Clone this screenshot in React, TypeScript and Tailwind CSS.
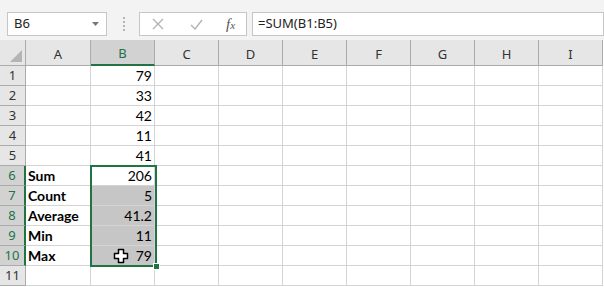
import React from "react";

const cols = ["A", "B", "C", "D", "E", "F", "G", "H", "I"];

const rows: { a?: string; b?: string }[] = [
  { b: "79" },
  { b: "33" },
  { b: "42" },
  { b: "11" },
  { b: "41" },
  { a: "Sum", b: "206" },
  { a: "Count", b: "5" },
  { a: "Average", b: "41.2" },
  { a: "Min", b: "11" },
  { a: "Max", b: "79" },
  {},
];

function FormulaBar() {
  return (
    <div className="flex h-[40px] items-start bg-[#f3f3f3] pt-[12px] font-['Noto_Sans',sans-serif] text-[13px] text-[#222]">
      <div className="ml-[7px] flex h-[24px] w-[100px] items-center justify-between border border-[#c6c6c6] bg-white pl-[6px] pr-[6px]">
        <span>B6</span>
        <svg width="8" height="5" viewBox="0 0 8 5">
          <path d="M0 0h7L3.5 4z" fill="#777" />
        </svg>
      </div>
      <div className="ml-[8px] flex h-[24px] w-[17px] flex-col items-center justify-center gap-[2px]">
        <span className="h-[2px] w-[2px] bg-[#b5b5b5]" />
        <span className="h-[2px] w-[2px] bg-[#b5b5b5]" />
        <span className="h-[2px] w-[2px] bg-[#b5b5b5]" />
        <span className="h-[2px] w-[2px] bg-[#b5b5b5]" />
      </div>
      <div className="ml-[7px] flex h-[24px] w-[108px] items-center border border-[#c6c6c6] bg-white">
        <svg className="ml-[12px]" width="12" height="12" viewBox="0 0 12 12">
          <path d="M1 1l10 10M11 1L1 11" stroke="#b3b3b3" strokeWidth="1.4" />
        </svg>
        <svg className="ml-[26px]" width="13" height="11" viewBox="0 0 13 11">
          <path d="M1 6l4 4 7-9" stroke="#b3b3b3" strokeWidth="1.4" fill="none" />
        </svg>
        <span className="ml-[23px] font-['Liberation_Serif',serif] text-[15px] italic text-[#555]">
          f<span className="text-[11px]">x</span>
        </span>
      </div>
      <div className="ml-[5px] flex h-[24px] flex-1 items-center border border-[#c6c6c6] bg-white pl-[5px]">
        =SUM(B1:B5)
      </div>
    </div>
  );
}

export default function App() {
  const isSelRow = (i: number) => i >= 5 && i <= 9;
  return (
    <div className="h-[287px] w-[604px] overflow-hidden bg-white">
      <FormulaBar />
      <div className="relative">
        <div className="grid grid-cols-[26px_65px_64px_64px_64px_64px_64px_64px_64px_64px] font-['Lato',sans-serif] text-[14px] text-black">
          <div className="relative h-[26px] border-r border-b border-[#ababab] bg-[#e6e6e6]">
            <svg className="absolute right-[3px] bottom-[3px]" width="12" height="12" viewBox="0 0 12 12">
              <path d="M12 0V12H0z" fill="#b4b4b4" />
            </svg>
          </div>
          {cols.map((c) =>
            c === "B" ? (
              <div
                key={c}
                className="flex h-[26px] items-center justify-center border-r border-[#ababab] border-b-2 border-b-[#217346] bg-[#d2d2d2] pt-[3px] font-['Noto_Sans',sans-serif] text-[13px] text-[#217346]"
              >
                {c}
              </div>
            ) : (
              <div
                key={c}
                className="flex h-[26px] items-center justify-center border-r border-b border-[#ababab] bg-[#e6e6e6] pt-[4px] font-['Noto_Sans',sans-serif] text-[13px] text-[#333]"
              >
                {c}
              </div>
            )
          )}
          {rows.map((r, i) => (
            <React.Fragment key={i}>
              {isSelRow(i) ? (
                <div className="flex h-[20px] items-center justify-center border-b border-[#ababab] border-r-2 border-r-[#217346] bg-[#d2d2d2] font-['Noto_Sans',sans-serif] text-[13px] text-[#217346]">
                  {i + 1}
                </div>
              ) : (
                <div className="flex h-[20px] items-center justify-center border-r border-b border-[#ababab] bg-[#e6e6e6] font-['Noto_Sans',sans-serif] text-[13px] text-[#333]">
                  {i + 1}
                </div>
              )}
              <div className="flex h-[20px] items-end border-r border-b border-[#d4d4d4] pl-[2px] font-bold leading-[18px]">
                {r.a}
              </div>
              <div
                className={
                  "flex h-[20px] items-end justify-end border-r border-b border-[#d4d4d4] pr-[2px] leading-[18px] " +
                  (i >= 6 && i <= 9 ? "bg-[#c6c6c6]" : "")
                }
              >
                {r.b}
              </div>
              {cols.slice(2).map((c) => (
                <div key={c} className="h-[20px] border-r border-b border-[#d4d4d4]" />
              ))}
            </React.Fragment>
          ))}
        </div>
        <div className="pointer-events-none absolute top-[125px] left-[90px] h-[102px] w-[67px] border-2 border-[#217346]" />
        <div className="pointer-events-none absolute top-[223px] left-[153px] h-[7px] w-[7px] border border-white bg-[#217346]" />
        <svg className="absolute top-[208px] left-[113px]" width="16" height="16" viewBox="0 0 16 16">
          <path
            d="M5.5 1.5h5v4h4v5h-4v4h-5v-4h-4v-5h4z"
            fill="white"
            stroke="black"
            strokeWidth="1.5"
            strokeLinejoin="round"
          />
        </svg>
      </div>
    </div>
  );
}
